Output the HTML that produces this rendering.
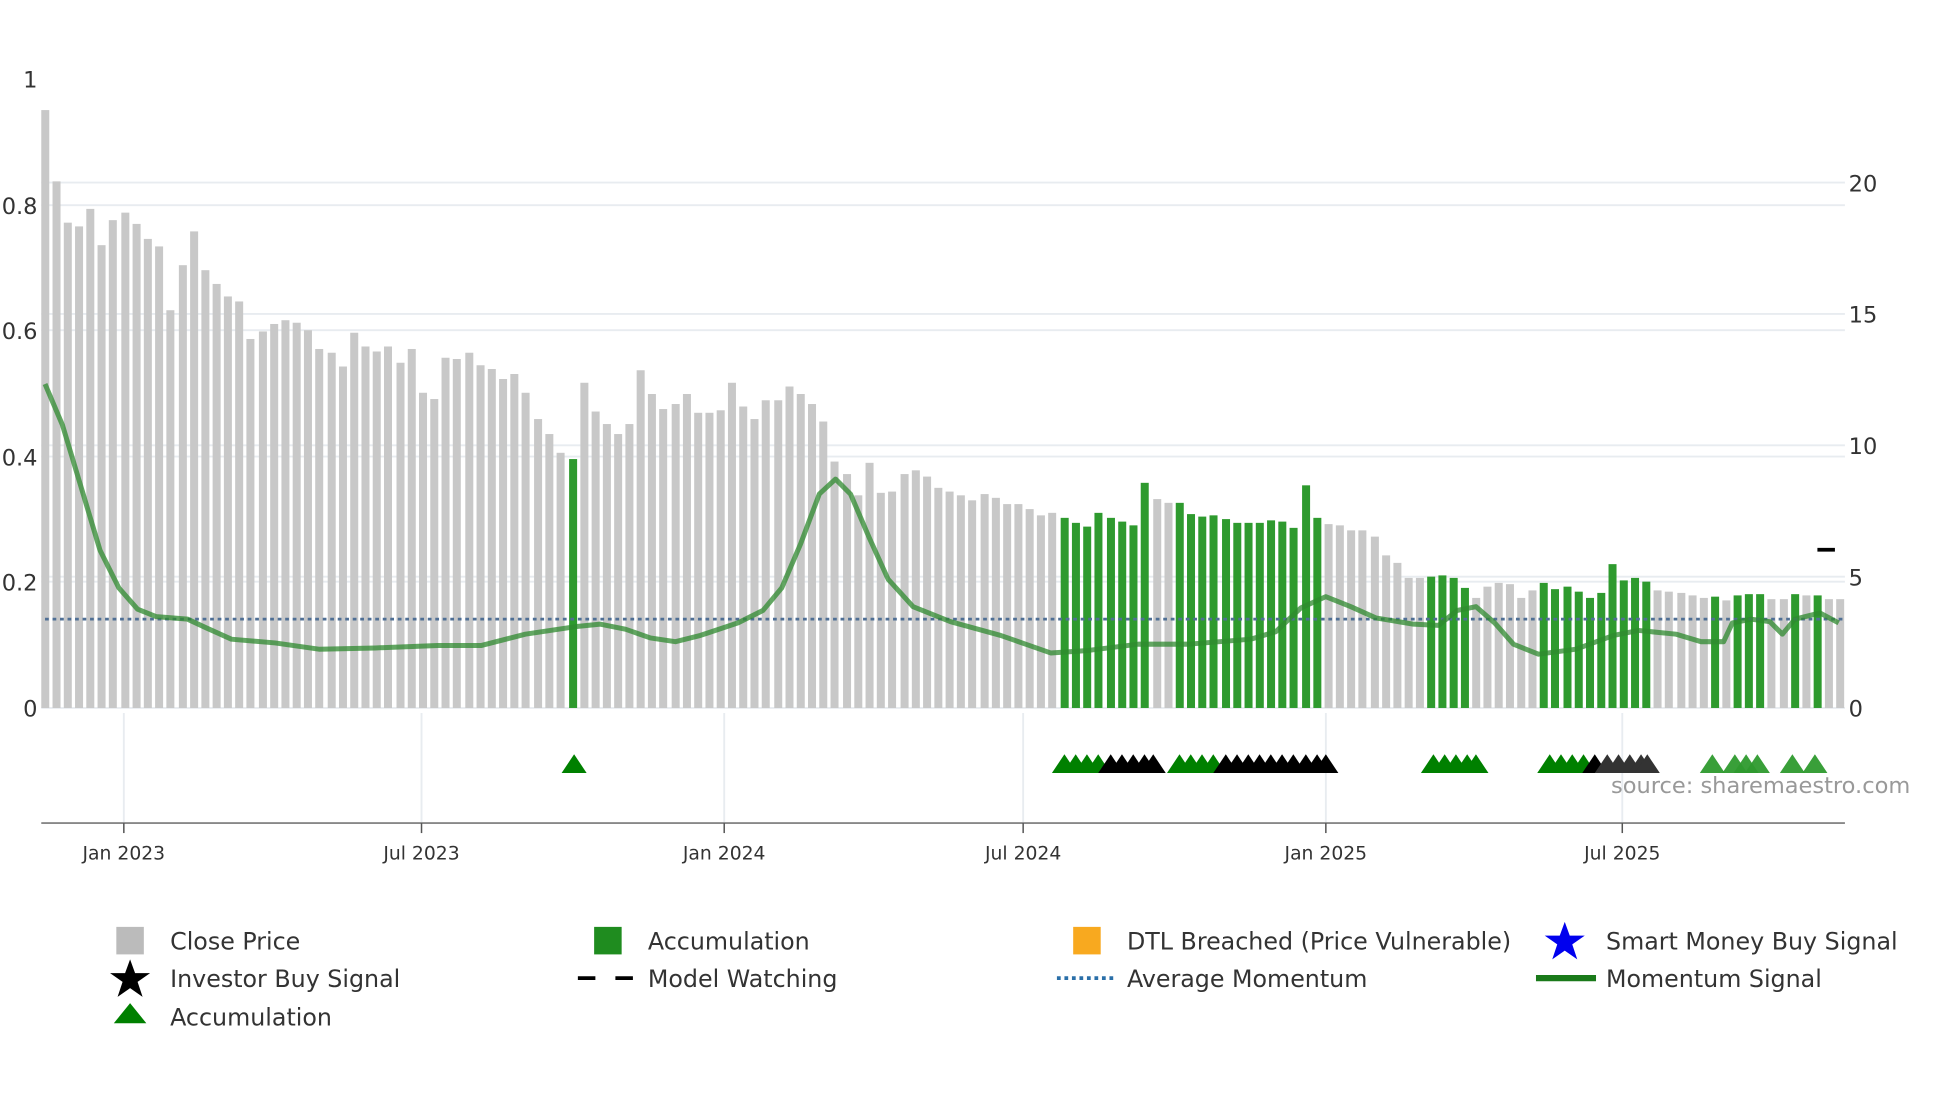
<!DOCTYPE html>
<html><head><meta charset="utf-8"><style>
html,body{margin:0;padding:0;background:#fff;width:1960px;height:1102px;overflow:hidden}
svg{display:block}
text{font-family:"DejaVu Sans","Liberation Sans",sans-serif}
</style></head><body>
<svg id="s" width="1960" height="1102" viewBox="0 0 1567 881" preserveAspectRatio="none" xmlns="http://www.w3.org/2000/svg">
<rect width="1567" height="881" fill="#fff"/>
<g stroke="#e8ecf0" stroke-width="1.5">
<line x1="33" x2="1475" y1="146" y2="146"/><line x1="33" x2="1475" y1="251" y2="251"/><line x1="33" x2="1475" y1="356" y2="356"/><line x1="33" x2="1475" y1="461" y2="461"/>
<line x1="33" x2="1475" y1="164" y2="164"/><line x1="33" x2="1475" y1="264" y2="264"/><line x1="33" x2="1475" y1="365" y2="365"/><line x1="33" x2="1475" y1="465" y2="465"/>
<line x1="33" x2="1475" y1="566" y2="566"/>
<line x1="99" x2="99" y1="570" y2="658"/><line x1="337" x2="337" y1="570" y2="658"/><line x1="579" x2="579" y1="570" y2="658"/><line x1="818" x2="818" y1="570" y2="658"/><line x1="1060" x2="1060" y1="570" y2="658"/><line x1="1297" x2="1297" y1="570" y2="658"/>
</g>
<g id="bars"></g>
<line x1="36" x2="1475" y1="495" y2="495" stroke="#4f6f95" stroke-width="2.2" stroke-dasharray="3,3"/>
<polyline id="mom" fill="none" stroke="#2f8a2f" stroke-opacity="0.75" stroke-width="4" stroke-linejoin="round" points="36,307 50,340 65,390 80,440 95,470 110,487 125,493 150,495 165,502 185,511 220,514 255,519 300,518 350,516 385,516 420,507 460,501 480,499 500,503 520,510 540,513 560,508 590,498 610,488 625,470 640,435 655,395 668,383 680,395 695,430 710,463 730,485 760,497 800,508 820,515 840,522 870,520 910,515 950,515 1000,511 1020,505 1040,486 1060,477 1080,485 1100,494 1130,499 1150,500 1165,488 1180,485 1195,498 1210,515 1230,523 1260,519 1290,508 1310,504 1340,507 1360,513 1378,513 1385,498 1400,495 1415,497 1425,507 1435,495 1455,490 1470,498"/>
<rect x="1453" y="438" width="14" height="3" fill="#000"/>
<g id="tri"></g>
<text x="1288" y="634" font-size="18" fill="#999">source: sharemaestro.com</text>
<line x1="33" x2="1475" y1="658" y2="658" stroke="#888" stroke-width="1.5"/>
<g stroke="#555" stroke-width="1.2"><line x1="99" x2="99" y1="658" y2="666"/><line x1="337" x2="337" y1="658" y2="666"/><line x1="579" x2="579" y1="658" y2="666"/><line x1="818" x2="818" y1="658" y2="666"/><line x1="1060" x2="1060" y1="658" y2="666"/><line x1="1297" x2="1297" y1="658" y2="666"/></g>
<g font-size="15" fill="#333" text-anchor="middle">
<text x="99" y="687">Jan 2023</text><text x="337" y="687">Jul 2023</text><text x="579" y="687">Jan 2024</text><text x="818" y="687">Jul 2024</text><text x="1060" y="687">Jan 2025</text><text x="1297" y="687">Jul 2025</text>
</g>
<g font-size="18" fill="#333" text-anchor="end">
<text x="30" y="70">1</text><text x="30" y="171">0.8</text><text x="30" y="271">0.6</text><text x="30" y="372">0.4</text><text x="30" y="472">0.2</text><text x="30" y="573">0</text>
</g>
<g font-size="18" fill="#333">
<text x="1478" y="153">20</text><text x="1478" y="258">15</text><text x="1478" y="363">10</text><text x="1478" y="468">5</text><text x="1478" y="573">0</text>
</g>
<g font-size="19" fill="#333">
<rect x="93" y="741" width="22" height="22" fill="#bbb"/><text x="136" y="759">Close Price</text>
<rect x="475" y="741" width="22" height="22" fill="#1f8c1f"/><text x="518" y="759">Accumulation</text>
<rect x="858" y="741" width="22" height="22" fill="#f8a91f"/><text x="901" y="759">DTL Breached (Price Vulnerable)</text>
<polygon points="1251,737 1255,748 1267,748 1257,755 1261,767 1251,760 1241,767 1245,755 1235,748 1247,748" fill="#0000ee"/><text x="1284" y="759">Smart Money Buy Signal</text>
<polygon points="104,767 108,778 120,778 110,785 114,797 104,790 94,797 98,785 88,778 100,778" fill="#000"/><text x="136" y="789">Investor Buy Signal</text>
<line x1="462" x2="506" y1="782" y2="782" stroke="#000" stroke-width="3" stroke-dasharray="14,16"/><text x="518" y="789">Model Watching</text>
<line x1="845" x2="890" y1="782" y2="782" stroke="#2a6fa8" stroke-width="3" stroke-dasharray="3,3"/><text x="901" y="789">Average Momentum</text>
<line x1="1228" x2="1276" y1="782" y2="782" stroke="#1a7a1a" stroke-width="5"/><text x="1284" y="789">Momentum Signal</text>
<polygon points="104,802 117,818 91,818" fill="#008000"/><text x="136" y="820">Accumulation</text>
</g>
</svg>
<script>
var d=[[36,88],[45,145],[54,178],[63,181],[72,167],[81,196],[90,176],[100,170],[109,179],[118,191],[127,197],[136,248],[146,212],[155,185],[164,216],[173,227],[182,237],[191,241],[200,271],[210,265],[219,259],[228,256],[237,258],[246,264],[255,279],[265,282],[274,293],[283,266],[292,277],[301,281],[310,277],[320,290],[329,279],[338,314],[347,319],[356,286],[365,287],[375,282],[384,292],[393,295],[402,303],[411,299],[420,314],[430,335],[439,347],[448,362],[458,367],[467,306],[476,329],[485,339],[494,347],[503,339],[512,296],[521,315],[530,327],[540,323],[549,315],[558,330],[567,330],[576,328],[585,306],[594,325],[603,335],[612,320],[622,320],[631,309],[640,315],[649,323],[658,337],[667,369],[677,379],[686,396],[695,370],[704,394],[713,393],[723,379],[732,376],[741,381],[750,390],[759,393],[768,396],[777,400],[787,395],[796,398],[805,403],[814,403],[823,407],[832,412],[841,410],[851,414],[860,418],[869,421],[878,410],[888,414],[897,417],[906,420],[915,386],[925,399],[934,402],[943,402],[952,411],[961,413],[970,412],[980,415],[989,418],[998,418],[1007,418],[1016,416],[1025,417],[1034,422],[1044,388],[1053,414],[1062,419],[1071,420],[1080,424],[1089,424],[1099,429],[1108,444],[1117,450],[1126,462],[1135,462],[1144,461],[1153,460],[1162,462],[1171,470],[1180,478],[1189,469],[1198,466],[1207,467],[1216,478],[1225,472],[1234,466],[1243,471],[1253,469],[1262,473],[1271,478],[1280,474],[1289,451],[1298,464],[1307,462],[1316,465],[1325,472],[1334,473],[1344,474],[1353,476],[1362,478],[1371,477],[1380,480],[1389,476],[1398,475],[1407,475],[1416,479],[1426,479],[1435,475],[1444,476],[1453,476],[1462,479],[1471,479]];
var green=[458,851,860,869,878,888,897,906,915,943,952,961,970,980,989,998,1007,1016,1025,1034,1044,1053,1144,1153,1162,1171,1234,1243,1253,1262,1271,1280,1289,1298,1307,1316,1371,1389,1398,1407,1435,1453];
var g=document.getElementById('bars'),h='';
d.forEach(function(b){var gr=green.indexOf(b[0])>=0;h+='<rect x="'+(b[0]-3)+'" y="'+b[1]+'" width="6.4" height="'+(566-b[1])+'" fill="'+(gr?'#2e9a2e':'#c8c8c8')+'"/>';});
g.innerHTML=h;
var t='';function tri(x,c,o){t+='<polygon points="'+(x-10)+',618 '+x+',603 '+(x+10)+',618" fill="'+c+'" fill-opacity="'+(o||1)+'"/>';}
tri(459,'#008000');
[851,860,869,878].forEach(function(x){tri(x,'#008000')});[888,897,906,915,922].forEach(function(x){tri(x,'#000')});
[943,952,961,970].forEach(function(x){tri(x,'#008000')});[980,989,998,1007,1016,1025,1034,1044,1053,1060].forEach(function(x){tri(x,'#000')});
[1146,1155,1164,1173,1180].forEach(function(x){tri(x,'#008000')});
[1239,1248,1257,1266].forEach(function(x){tri(x,'#008000')});[1275].forEach(function(x){tri(x,'#000')});[1285,1294,1303,1312,1317].forEach(function(x){tri(x,'#333')});
[1369,1387,1396,1405,1433,1451].forEach(function(x){tri(x,'#2e9a2e',0.95)});
document.getElementById('tri').innerHTML=t;
</script>
</body></html>
